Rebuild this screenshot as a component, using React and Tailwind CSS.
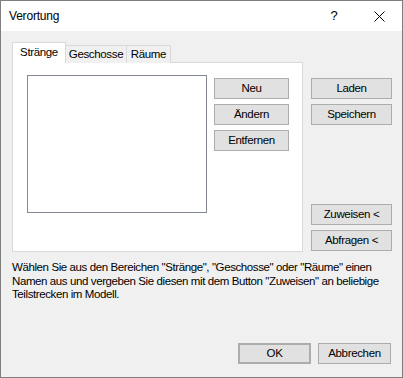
import React from "react";

const Btn = ({ children, className = "" }) => (
  <div
    className={
      "flex items-center justify-center h-[21px] bg-[#e1e1e1] border border-[#adadad] text-[11.5px] text-black leading-none tracking-[-0.35px] " +
      className
    }
  >
    {children}
  </div>
);

export default function App() {
  return (
    <div
      className="w-[403px] h-[378px] border border-[#7f7f7f] bg-[#f0f0f0] flex flex-col text-black"
      style={{ fontFamily: '"Liberation Sans", Arial, sans-serif' }}
    >
      {/* Title bar */}
      <div className="h-[30px] bg-white flex items-center pl-[8px] shrink-0">
        <span className="text-[12px] flex-1 tracking-[-0.2px]">Verortung</span>
        <span className="text-[13px] w-[10px] mr-[35px] text-center">?</span>
        <svg width="11" height="11" viewBox="0 0 11 11" className="mr-[17px]">
          <path d="M0.5 0.5 L10.5 10.5 M10.5 0.5 L0.5 10.5" stroke="#000" strokeWidth="1" />
        </svg>
      </div>

      {/* Body */}
      <div className="flex flex-col pl-[11px] pr-[10px] pt-[11px] flex-1">
        <div className="flex items-start gap-[8px]">
          {/* Tab control */}
          <div className="w-[291px] flex flex-col">
            <div className="flex items-end h-[21px] relative z-10 text-[11.5px] tracking-[-0.35px]">
              <div className="w-[54px] h-[21px] bg-white border border-[#d9d9d9] border-b-0 flex items-center justify-center pb-[1px]">
                Stränge
              </div>
              <div className="w-[61px] h-[18px] bg-[#f0f0f0] border border-[#d9d9d9] border-l-0 border-b-0 flex items-center justify-center whitespace-nowrap">
                Geschosse
              </div>
              <div className="w-[44px] h-[18px] bg-[#f0f0f0] border border-[#d9d9d9] border-l-0 border-b-0 flex items-center justify-center">
                Räume
              </div>
            </div>
            <div className="h-[190px] -mt-[1px] bg-white border border-[#d9d9d9] flex items-start pl-[14px] pt-[12px]">
              <div className="w-[180px] h-[138px] border border-[#828790] bg-white" />
              <div className="flex flex-col gap-[5px] ml-[7px] mt-[3px]">
                <Btn className="w-[75px]">Neu</Btn>
                <Btn className="w-[75px]">Ändern</Btn>
                <Btn className="w-[75px]">Entfernen</Btn>
              </div>
            </div>
          </div>

          {/* Right column */}
          <div className="w-[81px] flex flex-col pt-[36px]">
            <Btn>Laden</Btn>
            <Btn className="mt-[5px]">Speichern</Btn>
            <Btn className="mt-[79px]">Zuweisen &lt;</Btn>
            <Btn className="mt-[5px]">Abfragen &lt;</Btn>
          </div>
        </div>

        <p className="text-[11.5px] leading-[13.5px] mt-[9px] tracking-[-0.4px] whitespace-nowrap">
          Wählen Sie aus den Bereichen "Stränge", "Geschosse" oder "Räume" einen
          <br />
          Namen aus und vergeben Sie diesen mit dem Button "Zuweisen" an beliebige
          <br />
          Teilstrecken im Modell.
        </p>

        <div className="flex-1" />
        <div className="flex justify-end gap-[7px] pb-[13px] pr-[1px]">
          <Btn className="w-[73px] border-2 border-[#0078d7]">OK</Btn>
          <Btn className="w-[73px]">Abbrechen</Btn>
        </div>
      </div>
    </div>
  );
}
